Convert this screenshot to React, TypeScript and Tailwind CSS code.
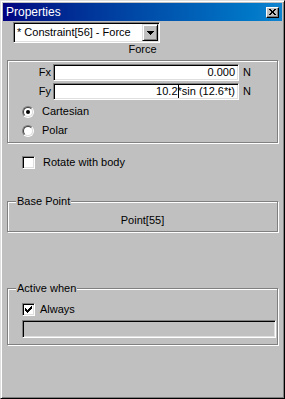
import React from "react";

const font = { fontFamily: '"Liberation Sans", Arial, sans-serif' };

function Sunken({ className, children }: { className?: string; children?: React.ReactNode }) {
  return (
    <div
      className={
        "border border-t-[#808080] border-l-[#808080] border-r-white border-b-white shadow-[inset_1px_1px_0_#000,inset_-1px_-1px_0_#dfdfdf] " +
        (className ?? "")
      }
    >
      {children}
    </div>
  );
}

function CheckBox({ checked }: { checked?: boolean }) {
  return (
    <Sunken className="w-[13px] h-[13px] bg-white flex items-center justify-center shrink-0">
      {checked && (
        <svg width="7" height="7" viewBox="0 0 7 7" shapeRendering="crispEdges">
          <path
            d="M6 0h1v1h-1zM5 1h2v1h-2zM0 2h1v1h-1zM4 2h3v1h-3zM0 3h2v1h-2zM3 3h3v1h-3zM0 4h5v1h-5zM1 5h3v1h-3zM2 6h1v1h-1z"
            fill="#000"
          />
        </svg>
      )}
    </Sunken>
  );
}

function Radio({ checked }: { checked?: boolean }) {
  return (
    <div className="w-[12px] h-[12px] rounded-full border border-t-[#808080] border-l-[#808080] border-r-white border-b-white shrink-0">
      <div className="w-full h-full rounded-full border border-t-[#404040] border-l-[#404040] border-r-[#dfdfdf] border-b-[#dfdfdf] bg-white flex items-center justify-center">
        {checked && <div className="w-[4px] h-[4px] rounded-full bg-black" />}
      </div>
    </div>
  );
}

function Group({ label, className, children }: { label?: string; className?: string; children?: React.ReactNode }) {
  return (
    <div
      className={
        "relative ml-[4px] w-[271px] border border-[#808080] shadow-[inset_1px_1px_0_#fff,1px_1px_0_#fff] " +
        (className ?? "")
      }
    >
      {label && (
        <span className="absolute -top-[7px] left-[8px] bg-[#c0c0c0] px-px leading-[13px]">{label}</span>
      )}
      {children}
    </div>
  );
}

export default function App() {
  return (
    <div
      style={font}
      className="w-[285px] h-[399px] bg-[#c0c0c0] text-[11px] text-black border border-t-[#dfdfdf] border-l-[#dfdfdf] border-r-black border-b-black shadow-[inset_1px_1px_0_#fff,inset_-1px_-1px_0_#808080] p-[2px] flex flex-col"
    >
      {/* caption */}
      <div className="h-[18px] bg-gradient-to-r from-[#000080] to-[#1084d0] flex items-center justify-between pl-[3px] pr-[3px]">
        <span className="text-white text-[12px] leading-[14px]">Properties</span>
        <div className="w-[13px] h-[11px] bg-[#c0c0c0] border border-t-white border-l-white border-r-black border-b-black shadow-[inset_-1px_-1px_0_#808080] flex items-center justify-center">
          <svg width="7" height="6" viewBox="0 0 7 6" shapeRendering="crispEdges">
            <path d="M0 0h2v1h1v1h1v-1h1v-1h2v1h-1v1h-1v2h1v1h1v1h-2v-1h-1v-1h-1v1h-1v1h-2v-1h1v-1h1v-2h-1v-1h-1z" fill="#000" />
          </svg>
        </div>
      </div>

      {/* object selector */}
      <Sunken className="mt-[1px] ml-[10px] w-[147px] h-[21px] bg-white flex items-center p-[1px]">
        <span className="flex-1 pl-[2px] leading-[13px] whitespace-nowrap">* Constraint[56] - Force</span>
        <div className="w-[16px] h-[17px] bg-[#c0c0c0] border border-t-[#dfdfdf] border-l-[#dfdfdf] border-r-black border-b-black shadow-[inset_1px_1px_0_#fff,inset_-1px_-1px_0_#808080] flex items-center justify-center">
          <svg width="7" height="4" viewBox="0 0 7 4" shapeRendering="crispEdges">
            <path d="M0 0h7v1h-1v1h-1v1h-1v1h-1v-1h-1v-1h-1v-1h-1z" fill="#000" />
          </svg>
        </div>
      </Sunken>

      <div className="h-[13px] leading-[13px] text-center">Force</div>

      {/* components */}
      <Group className="mt-[4px] h-[83px] pt-[3px]">
        {[
          ["Fx", "0.000"],
          ["Fy", ""],
        ].map(([name, value], i) => (
          <div key={name} className={"flex items-center " + (i ? "mt-[2px]" : "")}>
            <span className="w-[45px] pr-[2px] text-right leading-[13px]">{name}</span>
            <Sunken className="w-[186px] h-[17px] bg-white flex items-center justify-end pr-[3px]">
              {value ? (
                <span className="leading-[13px]">{value}</span>
              ) : (
                <span className="leading-[13px] whitespace-nowrap">
                  10.2
                  <span className="inline-block w-px h-[13px] bg-black align-middle -mr-px" />
                  *sin (12.6*t)
                </span>
              )}
            </Sunken>
            <span className="ml-[4px] leading-[13px]">N</span>
          </div>
        ))}
        <div className="mt-[2px] h-[19px] flex items-center pl-[14px] gap-[8px]">
          <Radio checked />
          <span className="leading-[13px]">Cartesian</span>
        </div>
        <div className="h-[19px] flex items-center pl-[14px] gap-[8px]">
          <Radio />
          <span className="leading-[13px]">Polar</span>
        </div>
      </Group>

      <div className="mt-[13px] ml-[19px] flex items-center gap-[8px]">
        <CheckBox />
        <span className="leading-[13px]">Rotate with body</span>
      </div>

      <Group label="Base Point" className="mt-[32px] h-[31px] pt-[12px]">
        <div className="text-center leading-[13px]">Point[55]</div>
      </Group>

      <Group label="Active when" className="mt-[56px] h-[57px] pt-[14px]">
        <div className="ml-[14px] flex items-center gap-[5px]">
          <CheckBox checked />
          <span className="leading-[13px]">Always</span>
        </div>
        <Sunken className="mt-[4px] ml-[14px] w-[254px] h-[18px] bg-[#c0c0c0]" />
      </Group>
    </div>
  );
}
